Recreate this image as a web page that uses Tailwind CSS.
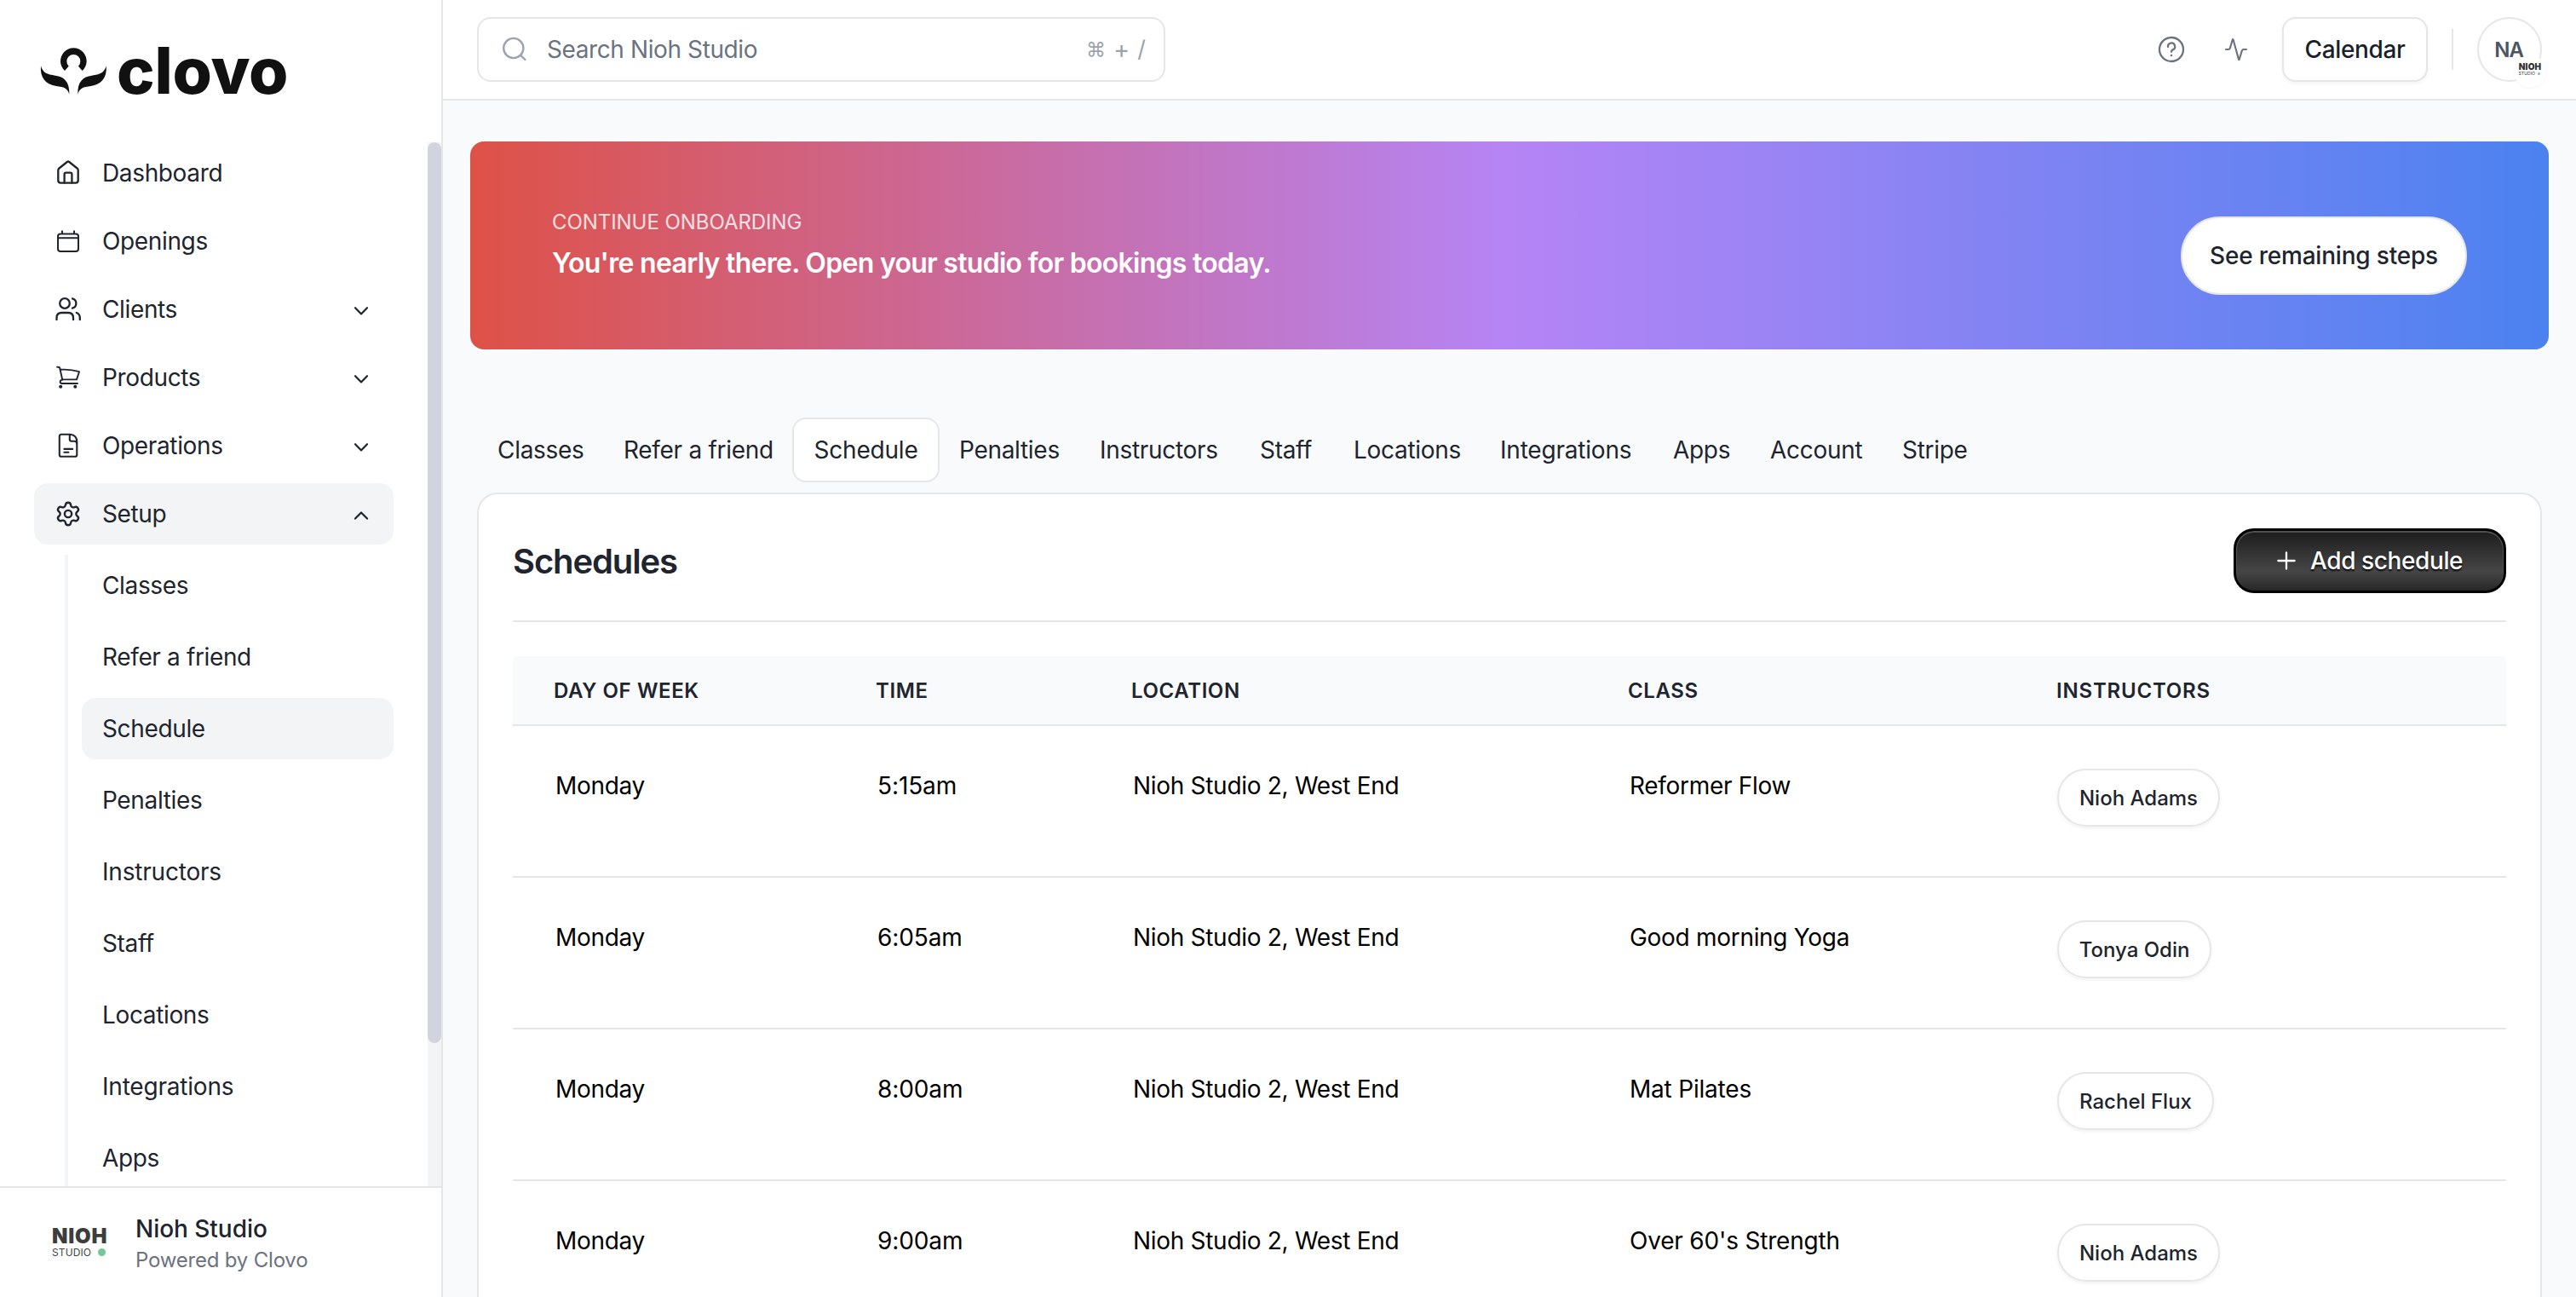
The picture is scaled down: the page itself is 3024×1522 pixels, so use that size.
<!DOCTYPE html>
<html lang="en">
<head>
<meta charset="utf-8">
<title>Schedules - Nioh Studio</title>
<script src="https://cdn.jsdelivr.net/npm/@tailwindcss/browser@4"></script>
</head>
<body class="flex h-[1522px] w-[3024px] overflow-hidden bg-[#f9fafc] font-['Inter',sans-serif] text-[28px] leading-[40px] tracking-[-0.36px] text-[#20242e]">

<!-- Sidebar -->
<aside class="flex h-full w-[520px] shrink-0 flex-col border-r-2 border-[#e5e6e8] bg-white">
  <div class="flex h-[167px] shrink-0 items-start pl-10 pt-10">
    <svg class="h-20 w-[100px] shrink-0" viewBox="0 0 300 240" fill="#111">
      <path d="M108 129A46 46 0 1 1 170 129L156 113A24 24 0 1 0 122 113Z"/>
      <path d="M24 112C30 135 45 143 75 146C105 149 126 168 124 212C118 190 105 186 78 183C42 178 20 155 24 112Z"/>
      <path d="M254 112C248 135 233 143 203 146C173 149 152 168 154 212C160 190 173 186 200 183C236 178 258 155 254 112Z"/>
    </svg>
    <span class="-ml-[3px] mt-[3px] text-[75px] font-extrabold leading-[80px] tracking-[-0.2px] text-[#111]">clovo</span>
  </div>
  <div class="flex min-h-0 flex-1 overflow-hidden">
    <nav class="flex flex-1 flex-col gap-2 pl-10 pr-10">
      <a class="flex h-[72px] shrink-0 items-center rounded-2xl pl-[22px] pr-7">
        <svg class="mr-[22px] size-9" viewBox="0 0 36 36" fill="none" stroke="currentColor" stroke-width="2.3" stroke-linejoin="round" stroke-linecap="round"><path d="M6.3 14.8Q6.3 13.4 7.4 12.5L16.8 5Q18 4.1 19.2 5L28.6 12.5Q29.7 13.4 29.7 14.8V26.8Q29.7 29.7 26.8 29.7H9.2Q6.3 29.7 6.3 26.8Z"/><path d="M13.6 29.5V19.4Q13.6 17.6 15.4 17.6H20.6Q22.4 17.6 22.4 19.4V29.5"/></svg>Dashboard</a>
      <a class="flex h-[72px] shrink-0 items-center rounded-2xl pl-[22px] pr-7">
        <svg class="mr-[22px] size-9" viewBox="0 0 36 36" fill="none" stroke="currentColor" stroke-width="2" stroke-linejoin="round"><rect x="6" y="9.4" width="24" height="20.6" rx="3"/><path d="M6 14.2H30M11 5.6V9.4M25 5.6V9.4"/></svg>Openings</a>
      <a class="flex h-[72px] shrink-0 items-center rounded-2xl pl-[22px] pr-7">
        <svg class="mr-[22px] size-9" viewBox="0 0 36 36" fill="none" stroke="currentColor" stroke-width="2.3" stroke-linecap="round"><circle cx="14" cy="11" r="5.8"/><path d="M4.5 30.2V28Q4.5 22 10.5 22H18Q24 22 24 28V30.2M23 5.3A5.9 5.9 0 0 1 23 16.7M27.8 22Q31.8 23.5 31.8 28V30.2"/></svg>Clients
        <svg class="ml-auto mt-1 h-3 w-5" viewBox="0 0 20 12" fill="none" stroke="currentColor" stroke-width="2.2" stroke-linecap="round" stroke-linejoin="round"><path d="M3 2.2L10 9.4L17 2.2"/></svg></a>
      <a class="flex h-[72px] shrink-0 items-center rounded-2xl pl-[22px] pr-7">
        <svg class="mr-[22px] size-9" viewBox="0 0 36 36" fill="none" stroke="currentColor" stroke-width="1.9" stroke-linecap="round" stroke-linejoin="round"><path d="M5 5.6L7.4 6Q8 6.2 8.2 7L11.3 20.8M8.7 8.8Q21 8 31 11.2L28 20.4H11.3Q8.6 21.2 8.6 23.2Q8.8 25 10.6 25H29"/><circle cx="9.2" cy="28.8" r="1.1" fill="currentColor"/><circle cx="26.3" cy="28.8" r="1.1" fill="currentColor"/></svg>Products
        <svg class="ml-auto mt-1 h-3 w-5" viewBox="0 0 20 12" fill="none" stroke="currentColor" stroke-width="2.2" stroke-linecap="round" stroke-linejoin="round"><path d="M3 2.2L10 9.4L17 2.2"/></svg></a>
      <a class="flex h-[72px] shrink-0 items-center rounded-2xl pl-[22px] pr-7">
        <svg class="mr-[22px] size-9" viewBox="0 0 36 36" fill="none" stroke="currentColor" stroke-width="2.1" stroke-linecap="round" stroke-linejoin="round"><path d="M10 4.8H20.5Q28.3 5.8 28.3 13.5V28.4Q28.3 30.8 25.9 30.8H10Q7.8 30.8 7.8 28.4V7.2Q7.8 4.8 10 4.8ZM19.8 5V10.6Q19.8 12.8 22 12.8H25.5Q28.2 13 28.2 16M13.4 21.9H23.2M13.4 25.8H18.4"/></svg>Operations
        <svg class="ml-auto mt-1 h-3 w-5" viewBox="0 0 20 12" fill="none" stroke="currentColor" stroke-width="2.2" stroke-linecap="round" stroke-linejoin="round"><path d="M3 2.2L10 9.4L17 2.2"/></svg></a>
      <a class="flex h-[72px] shrink-0 items-center rounded-2xl bg-[#f3f4f6] pl-[22px] pr-7">
        <svg class="ml-0.5 mr-6 size-8" viewBox="0 0 24 24" fill="none" stroke="currentColor" stroke-width="1.8" stroke-linecap="round" stroke-linejoin="round"><path d="M9.671 4.136a2.34 2.34 0 0 1 4.659 0 2.34 2.34 0 0 0 3.319 1.915 2.34 2.34 0 0 1 2.33 4.033 2.34 2.34 0 0 0 0 3.831 2.34 2.34 0 0 1-2.33 4.033 2.34 2.34 0 0 0-3.319 1.915 2.34 2.34 0 0 1-4.659 0 2.34 2.34 0 0 0-3.32-1.915 2.34 2.34 0 0 1-2.33-4.033 2.34 2.34 0 0 0 0-3.831A2.34 2.34 0 0 1 6.35 6.051a2.34 2.34 0 0 0 3.319-1.915"/><circle cx="12" cy="12" r="3.1"/></svg>Setup
        <svg class="ml-auto mt-1 h-3 w-5" viewBox="0 0 20 12" fill="none" stroke="currentColor" stroke-width="2.2" stroke-linecap="round" stroke-linejoin="round"><path d="M3 9.6L10 2.4L17 9.6"/></svg></a>
      <div class="ml-9 mt-1 flex shrink-0 flex-col gap-3 border-l-4 border-[#f3f4f6] pl-4">
        <a class="flex h-[72px] items-center rounded-2xl pl-6">Classes</a>
        <a class="flex h-[72px] items-center rounded-2xl pl-6">Refer a friend</a>
        <a class="flex h-[72px] items-center rounded-2xl bg-[#f3f4f6] pl-6">Schedule</a>
        <a class="flex h-[72px] items-center rounded-2xl pl-6">Penalties</a>
        <a class="flex h-[72px] items-center rounded-2xl pl-6 tracking-[-0.2px]">Instructors</a>
        <a class="flex h-[72px] items-center rounded-2xl pl-6">Staff</a>
        <a class="flex h-[72px] items-center rounded-2xl pl-6">Locations</a>
        <a class="flex h-[72px] items-center rounded-2xl pl-6 tracking-[-0.2px]">Integrations</a>
        <a class="flex h-[72px] items-center rounded-2xl pl-6">Apps</a>
      </div>
    </nav>
    <div class="h-full w-4 shrink-0 bg-[#f3f4f6]"><div class="h-[1057px] w-4 rounded-full bg-[#d1d4dc]"></div></div>
  </div>
  <div class="flex h-[130px] shrink-0 items-start border-t-2 border-[#e5e6e8] pl-[61px]">
    <div class="flex w-[98px] flex-col pt-[45px]">
      <span class="text-[24px] font-black leading-6 tracking-[0.8px] text-[#3d3d3d]">NIOH</span>
      <span class="flex items-center text-[12px] leading-[13px] tracking-[0.1px] text-[#444]">STUDIO<span class="ml-[8px] size-[9px] rounded-full bg-[#74c79a]"></span></span>
    </div>
    <div class="flex flex-col pt-7">
      <span class="font-medium leading-10 tracking-[-0.03px]">Nioh Studio</span>
      <span class="text-[24px] leading-[34px] tracking-[-0.2px] text-[#6b7280]">Powered by Clovo</span>
    </div>
  </div>
</aside>

<div class="flex min-w-0 flex-1 flex-col">
  <!-- Top bar -->
  <header class="flex h-[118px] shrink-0 items-center border-b-2 border-[#e5e6e8] bg-white pl-10 pr-10">
    <div class="flex h-[76px] w-[808px] items-center rounded-2xl border-2 border-[#e5e6e8] pl-[26px] pr-[21px]">
      <svg class="mr-[22px] size-8" viewBox="0 0 32 32" fill="none" stroke="#9ca3af" stroke-width="2.4" stroke-linecap="round"><circle cx="14.8" cy="14.5" r="11.6"/><path d="M23.4 23.2L28.4 28"/></svg>
      <span class="tracking-[-0.4px] text-[#6b7280]">Search Nioh Studio</span>
      <span class="ml-auto flex items-center tracking-normal text-[#9ca3af]"><span class="text-[23px]">⌘</span><span class="ml-[9px] text-[29px]">+</span><span class="ml-[9px] text-[27px]">/</span></span>
    </div>
    <div class="ml-auto flex items-center">
      <svg class="mr-[46px] size-8" viewBox="0 0 32 32" fill="none" stroke="#6b7280" stroke-width="2.3" stroke-linecap="round"><circle cx="16" cy="16" r="14"/><path d="M12 12.9A4.1 4.1 0 1 1 17.6 16.4Q16 17.2 16 18.8"/><circle cx="16" cy="23" r="0.6" fill="#6b7280" stroke-width="1.4"/></svg>
      <svg class="mr-[40px] size-7" viewBox="0 0 28 28" fill="none" stroke="#6b7280" stroke-width="2.1" stroke-linecap="round" stroke-linejoin="round"><path d="M2 14H5Q6.4 14 6.9 12.4L9.8 2.6Q10.2 1.4 10.7 2.8L17 25.6Q17.4 26.8 17.8 25.4L20.8 15.6Q21.3 14 22.8 14H26"/></svg>
      <button class="h-[76px] w-[171px] rounded-2xl border-2 border-[#e5e6e8] bg-white text-center font-medium tracking-[-0.34px] text-[#1b1f2a] shadow-[0_2px_4px_rgba(0,0,0,0.05)]">Calendar</button>
      <div class="ml-7 h-12 w-0.5 bg-[#e5e6e8]"></div>
      <div class="relative ml-7 flex size-[76px] items-center justify-center rounded-full border-2 border-[#e5e6e8] text-[24px] font-semibold tracking-[-1px] text-[#4b5563]">
        <span class="-ml-0.5 mt-0.5">NA</span>
        <div class="absolute -bottom-[9px] -right-[7px] flex size-[38px] flex-col items-center justify-center rounded-full bg-white text-[#333] shadow-[0_1px_2px_rgba(0,0,0,0.05)]">
          <span class="-mt-[5px] text-[10px] font-black leading-[9px] tracking-[0.2px]">NIOH</span>
          <span class="flex w-[27px] items-center text-[5px] font-normal leading-[6px] tracking-[0.1px]">STUDIO<span class="ml-[3px] size-[3px] rounded-full bg-[#74c79a]"></span></span>
        </div>
      </div>
    </div>
  </header>

  <main class="flex min-h-0 flex-1 flex-col overflow-hidden pl-8 pr-8 pt-12">
    <!-- Onboarding banner -->
    <section class="flex h-[244px] shrink-0 items-center justify-between rounded-2xl bg-[linear-gradient(90deg,#de5147_0%,#b584f5_50%,#4b82f0_100%)] pl-24 pr-24">
      <div class="flex flex-col gap-[10px]">
        <span class="text-[24px] leading-8 tracking-[-0.06px] text-white/80">CONTINUE ONBOARDING</span>
        <span class="text-[32px] font-semibold leading-[44px] tracking-[-0.72px] text-white">You're nearly there. Open your studio for bookings today.</span>
      </div>
      <button class="mt-6 h-[92px] w-[336px] rounded-full border-2 border-[#e5e6e8] bg-white text-center font-medium tracking-[-0.2px]">See remaining steps</button>
    </section>

    <!-- Section tabs -->
    <nav class="-mr-4 ml-2 mt-20 flex h-[76px] shrink-0 items-center tracking-[-0.3px]">
      <a class="w-[148px] shrink-0 pl-6">Classes</a>
      <a class="w-[222px] shrink-0 pl-6">Refer a friend</a>
      <a class="flex h-[76px] w-[173px] shrink-0 items-center justify-center rounded-2xl border-2 border-[#e5e6e8] bg-white tracking-[-0.2px]">Schedule</a>
      <a class="w-[164px] shrink-0 pl-[23px]">Penalties</a>
      <a class="w-[188px] shrink-0 pl-6">Instructors</a>
      <a class="w-[110px] shrink-0 pl-6">Staff</a>
      <a class="w-[172px] shrink-0 pl-6">Locations</a>
      <a class="w-[203px] shrink-0 pl-6 tracking-[-0.2px]">Integrations</a>
      <a class="w-[114px] shrink-0 pl-6">Apps</a>
      <a class="w-[155px] shrink-0 pl-6">Account</a>
      <a class="shrink-0 pl-6">Stripe</a>
    </nav>

    <!-- Schedules card -->
    <section class="mx-2 mt-3 flex flex-1 flex-col rounded-t-[24px] border-2 border-b-0 border-[#e5e6e8] bg-white px-10 pt-10">
      <div class="flex h-[110px] shrink-0 items-start justify-between border-b-2 border-[#e5e6e8]">
        <h1 class="mt-[15px] text-[40px] font-semibold leading-[48px] tracking-[-1.13px]">Schedules</h1>
        <button class="flex h-[76px] w-[320px] items-center rounded-[24px] border-[3px] border-black bg-[linear-gradient(180deg,#1c1c1c_0%,#464646_68%,#272727_100%)] pl-[46px] font-medium tracking-[-0.4px] text-white shadow-[inset_0_1px_0_1px_#505050]">
          <svg class="mr-[15px] size-[26px]" viewBox="0 0 26 26" stroke="#fff" stroke-width="2.3" stroke-linecap="round"><path d="M3.4 13H22.6M13 3.4V22.6"/></svg>
          <span class="[text-shadow:0_2px_2px_rgba(0,0,0,0.9)]">Add schedule</span>
        </button>
      </div>
      <div class="mt-10 grid h-[82px] shrink-0 grid-cols-[378px_300px_583px_503px_1fr] items-center border-b-2 border-[#e5e6e8] bg-[#f9fafc] pl-12 pt-0.5 text-[24px] font-semibold tracking-[0.6px]">
        <span>DAY OF WEEK</span><span>TIME</span><span>LOCATION</span><span>CLASS</span><span class="tracking-[0.8px]">INSTRUCTORS</span>
      </div>
      <div class="grid h-[178px] shrink-0 grid-cols-[378px_300px_583px_502px_1fr] items-start border-b-2 border-[#e5e6e8] pl-[50px] pt-[50px] tracking-[-0.3px] text-black">
        <span>Monday</span><span class="tracking-[-0.1px]">5:15am</span><span>Nioh Studio 2, West End</span><span>Reformer Flow</span>
        <span class="flex h-[68px] w-[191px] items-center justify-center rounded-full border-2 border-[#e5e6e8] pt-0.5 text-[24px] font-medium tracking-normal text-[#20242e] shadow-[0_2px_4px_rgba(0,0,0,0.06)]">Nioh Adams</span>
      </div>
      <div class="grid h-[178px] shrink-0 grid-cols-[378px_300px_583px_502px_1fr] items-start border-b-2 border-[#e5e6e8] pl-[50px] pt-[50px] tracking-[-0.3px] text-black">
        <span>Monday</span><span class="tracking-[-0.1px]">6:05am</span><span>Nioh Studio 2, West End</span><span>Good morning Yoga</span>
        <span class="flex h-[68px] w-[181px] items-center justify-center rounded-full border-2 border-[#e5e6e8] pt-0.5 text-[24px] font-medium tracking-normal text-[#20242e] shadow-[0_2px_4px_rgba(0,0,0,0.06)]">Tonya Odin</span>
      </div>
      <div class="grid h-[178px] shrink-0 grid-cols-[378px_300px_583px_502px_1fr] items-start border-b-2 border-[#e5e6e8] pl-[50px] pt-[50px] tracking-[-0.3px] text-black">
        <span>Monday</span><span class="tracking-[-0.1px]">8:00am</span><span>Nioh Studio 2, West End</span><span class="tracking-[-0.2px]">Mat Pilates</span>
        <span class="flex h-[68px] w-[184px] items-center justify-center rounded-full border-2 border-[#e5e6e8] pt-0.5 text-[24px] font-medium tracking-normal text-[#20242e] shadow-[0_2px_4px_rgba(0,0,0,0.06)]">Rachel Flux</span>
      </div>
      <div class="grid h-[138px] shrink-0 grid-cols-[378px_300px_583px_502px_1fr] items-start pl-[50px] pt-[50px] tracking-[-0.3px] text-black">
        <span>Monday</span><span class="tracking-[-0.1px]">9:00am</span><span>Nioh Studio 2, West End</span><span class="tracking-[-0.2px]">Over 60's Strength</span>
        <span class="flex h-[68px] w-[191px] items-center justify-center rounded-full border-2 border-[#e5e6e8] pt-0.5 text-[24px] font-medium tracking-normal text-[#20242e] shadow-[0_2px_4px_rgba(0,0,0,0.06)]">Nioh Adams</span>
      </div>
    </section>
  </main>
</div>
</body>
</html>
